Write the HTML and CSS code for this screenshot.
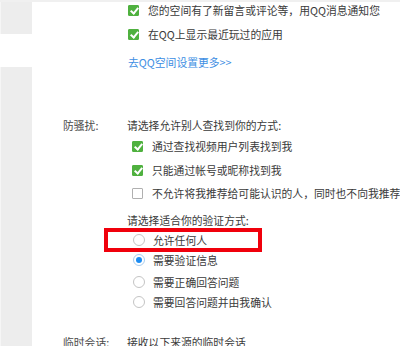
FILE: index.html
```html
<!DOCTYPE html>
<html lang="zh">
<head>
<meta charset="utf-8">
<link rel="stylesheet" href="styles.css">
</head>
<body>
<div class="page">
  <div class="sidebar">
    <div class="side-block side-top"></div>
    <div class="side-block side-main"></div>
  </div>
  <div class="main">
    <div class="section section-top">
      <div class="opts">
        <div class="row r1"><span class="cb on"></span><span>您的空间有了新留言或评论等，用QQ消息通知您</span></div>
        <div class="row r2"><span class="cb on"></span><span>在QQ上显示最近玩过的应用</span></div>
        <div class="row link-row"><a class="link">去QQ空间设置更多&gt;&gt;</a></div>
      </div>
    </div>
    <div class="section section-guard">
      <div class="label">防骚扰:</div>
      <div class="opts">
        <div class="row head">请选择允许别人查找到你的方式:</div>
        <div class="row cbrow g1"><span class="cb on"></span><span>通过查找视频用户列表找到我</span></div>
        <div class="row cbrow g2"><span class="cb on"></span><span>只能通过帐号或昵称找到我</span></div>
        <div class="row cbrow g3"><span class="cb"></span><span class="nowrap">不允许将我推荐给可能认识的人，同时也不向我推荐</span></div>
        <div class="row head head2">请选择适合你的验证方式:</div>
        <div class="row rdrow v1"><span class="rd"></span><span>允许任何人</span><span class="mark"></span></div>
        <div class="row rdrow v2"><span class="rd on"></span><span>需要验证信息</span></div>
        <div class="row rdrow v3"><span class="rd"></span><span>需要正确回答问题</span></div>
        <div class="row rdrow v4"><span class="rd"></span><span>需要回答问题并由我确认</span></div>
      </div>
    </div>
    <div class="section section-temp">
      <div class="label">临时会话:</div>
      <div class="opts">
        <div class="row head">接收以下来源的临时会话</div>
      </div>
    </div>
  </div>
</div>
</body>
</html>
```

FILE: styles.css
```css
html, body {
  margin: 0;
  padding: 0;
  background: #ffffff;
}
body {
  font-family: "Noto Sans CJK SC", "Microsoft YaHei", sans-serif;
  font-size: 10.8px;
  color: #3a3a3a;
  overflow: hidden;
  width: 400px;
  height: 346px;
}
.page {
  display: flex;
  border-top: 2px solid #f0f0f0;
  height: 344px;
}
.sidebar {
  width: 32px;
  flex: none;
  display: flex;
  flex-direction: column;
}
.side-block {
  background: #ededed;
  border-left: 1px solid #f6f6f6;
}
.side-top {
  height: 32px;
}
.side-main {
  margin-top: 33px;
  flex: 1;
}
.main {
  flex: 1;
  display: flex;
  flex-direction: column;
}
.section {
  display: flex;
}
.label {
  width: 64px;
  padding-left: 31px;
  line-height: 16px;
  color: #4a4a4a;
  flex: none;
}
.section-top .opts {
  padding-left: 96px;
}
.opts {
  display: flex;
  flex-direction: column;
}
.row {
  display: flex;
  align-items: center;
  height: 16px;
  line-height: 16px;
  white-space: nowrap;
  position: relative;
}
.r2 { margin-top: 8px; }
.link-row { margin-top: 12px; }
.link {
  color: #3d8ee3;
  text-decoration: none;
}
.section-guard {
  margin-top: 47px;
}
.cbrow { padding-left: 5px; }
.g1 { margin-top: 5px; }
.g2 { margin-top: 8px; }
.g3 { margin-top: 7px; }
.head2 { margin-top: 11px; }
.rdrow { padding-left: 6px; }
.v1 { margin-top: 4px; }
.v2 { margin-top: 4px; }
.v3 { margin-top: 6px; }
.v4 { margin-top: 4px; }
.section-temp {
  margin-top: 24px;
}
.cb {
  width: 11px;
  height: 11px;
  box-sizing: border-box;
  border: 1px solid #b0b0b0;
  border-radius: 1px;
  margin-right: 9px;
  flex: none;
  position: relative;
  background: #fff;
}
.cb.on {
  background: #4fb13f;
  border-color: #4fb13f;
}
.cb.on::after {
  content: "";
  position: absolute;
  left: 3px;
  top: 0px;
  width: 3px;
  height: 6px;
  border-right: 2px solid #fff;
  border-bottom: 2px solid #fff;
  transform: rotate(40deg);
}
.rd {
  width: 12px;
  height: 12px;
  box-sizing: border-box;
  border: 1px solid #c4c4c4;
  border-radius: 50%;
  margin-right: 8px;
  flex: none;
  position: relative;
  background: #fff;
}
.rd.on {
  border-color: #a9cdef;
}
.rd.on::after {
  content: "";
  position: absolute;
  left: 2px;
  top: 2px;
  width: 6px;
  height: 6px;
  border-radius: 50%;
  background: #1b8cf2;
}
.mark {
  position: absolute;
  left: -23px;
  top: -4px;
  width: 158px;
  height: 24px;
  box-sizing: border-box;
  border: 4px solid #f0000c;
}
```
